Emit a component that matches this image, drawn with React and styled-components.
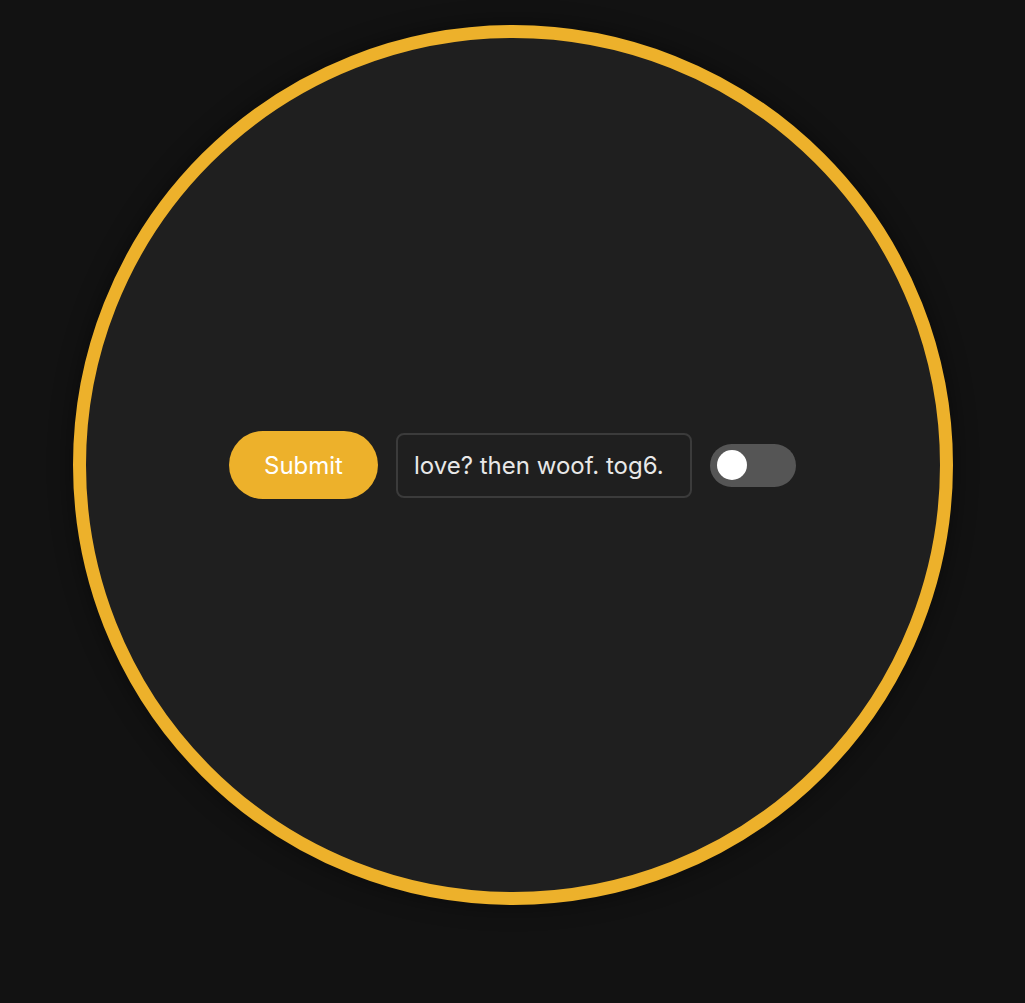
import React, {useState} from 'react';
import styled, {createGlobalStyle} from 'styled-components';

const GlobalStyle = createGlobalStyle`
  html, body {
    margin: 0;
    padding: 0;
    background: #121212;
  }
  body {
    font-family: Inter, "Noto Sans", "Liberation Sans", sans-serif;
  }
`;

const Page = styled.div`
  display: flex;
  justify-content: center;
  min-height: 100vh;
  padding-top: 25px;
  box-sizing: border-box;
`;

const Circle = styled.div`
  align-items: center;
  background: #1f1f1f;
  border: 13px solid #edb12b;
  border-radius: 50%;
  box-shadow: 0 0 24px rgba(0, 0, 0, 0.45);
  box-sizing: border-box;
  display: flex;
  height: 880px;
  justify-content: center;
  width: 880px;
`;

const Row = styled.div`
  align-items: center;
  display: flex;
  gap: 18px;
`;

const SubmitButton = styled.button`
  background: #edb12b;
  border: none;
  border-radius: 34px;
  color: #fff;
  cursor: pointer;
  font-family: inherit;
  font-size: 24px;
  font-weight: 400;
  height: 68px;
  padding: 0;
  width: 149px;
`;

const TextInput = styled.input`
  background: #1f1f1f;
  border: 2px solid #3b3b3b;
  border-radius: 8px;
  box-sizing: border-box;
  color: #e8e8e8;
  font-family: inherit;
  font-size: 24px;
  height: 65px;
  outline: none;
  padding: 0 16px;
  width: 296px;
`;

const Toggle = styled.button`
  background: ${props => props.on ? '#edb12b' : '#555555'};
  border: none;
  border-radius: 22px;
  cursor: pointer;
  display: flex;
  height: 43px;
  justify-content: ${props => props.on ? 'flex-end' : 'flex-start'};
  align-items: center;
  padding: 0 7px;
  width: 86px;
`;

const Knob = styled.span`
  background: #fff;
  border-radius: 50%;
  display: block;
  height: 30px;
  width: 30px;
`;

export default function App() {
  const [on, setOn] = useState(false);
  const [text, setText] = useState('love? then woof. tog6.');
  return (
    <>
      <GlobalStyle />
      <Page>
        <Circle>
          <Row>
            <SubmitButton>Submit</SubmitButton>
            <TextInput value={text} onChange={e => setText(e.target.value)} />
            <Toggle on={on} onClick={() => setOn(!on)}>
              <Knob />
            </Toggle>
          </Row>
        </Circle>
      </Page>
    </>
  );
}
